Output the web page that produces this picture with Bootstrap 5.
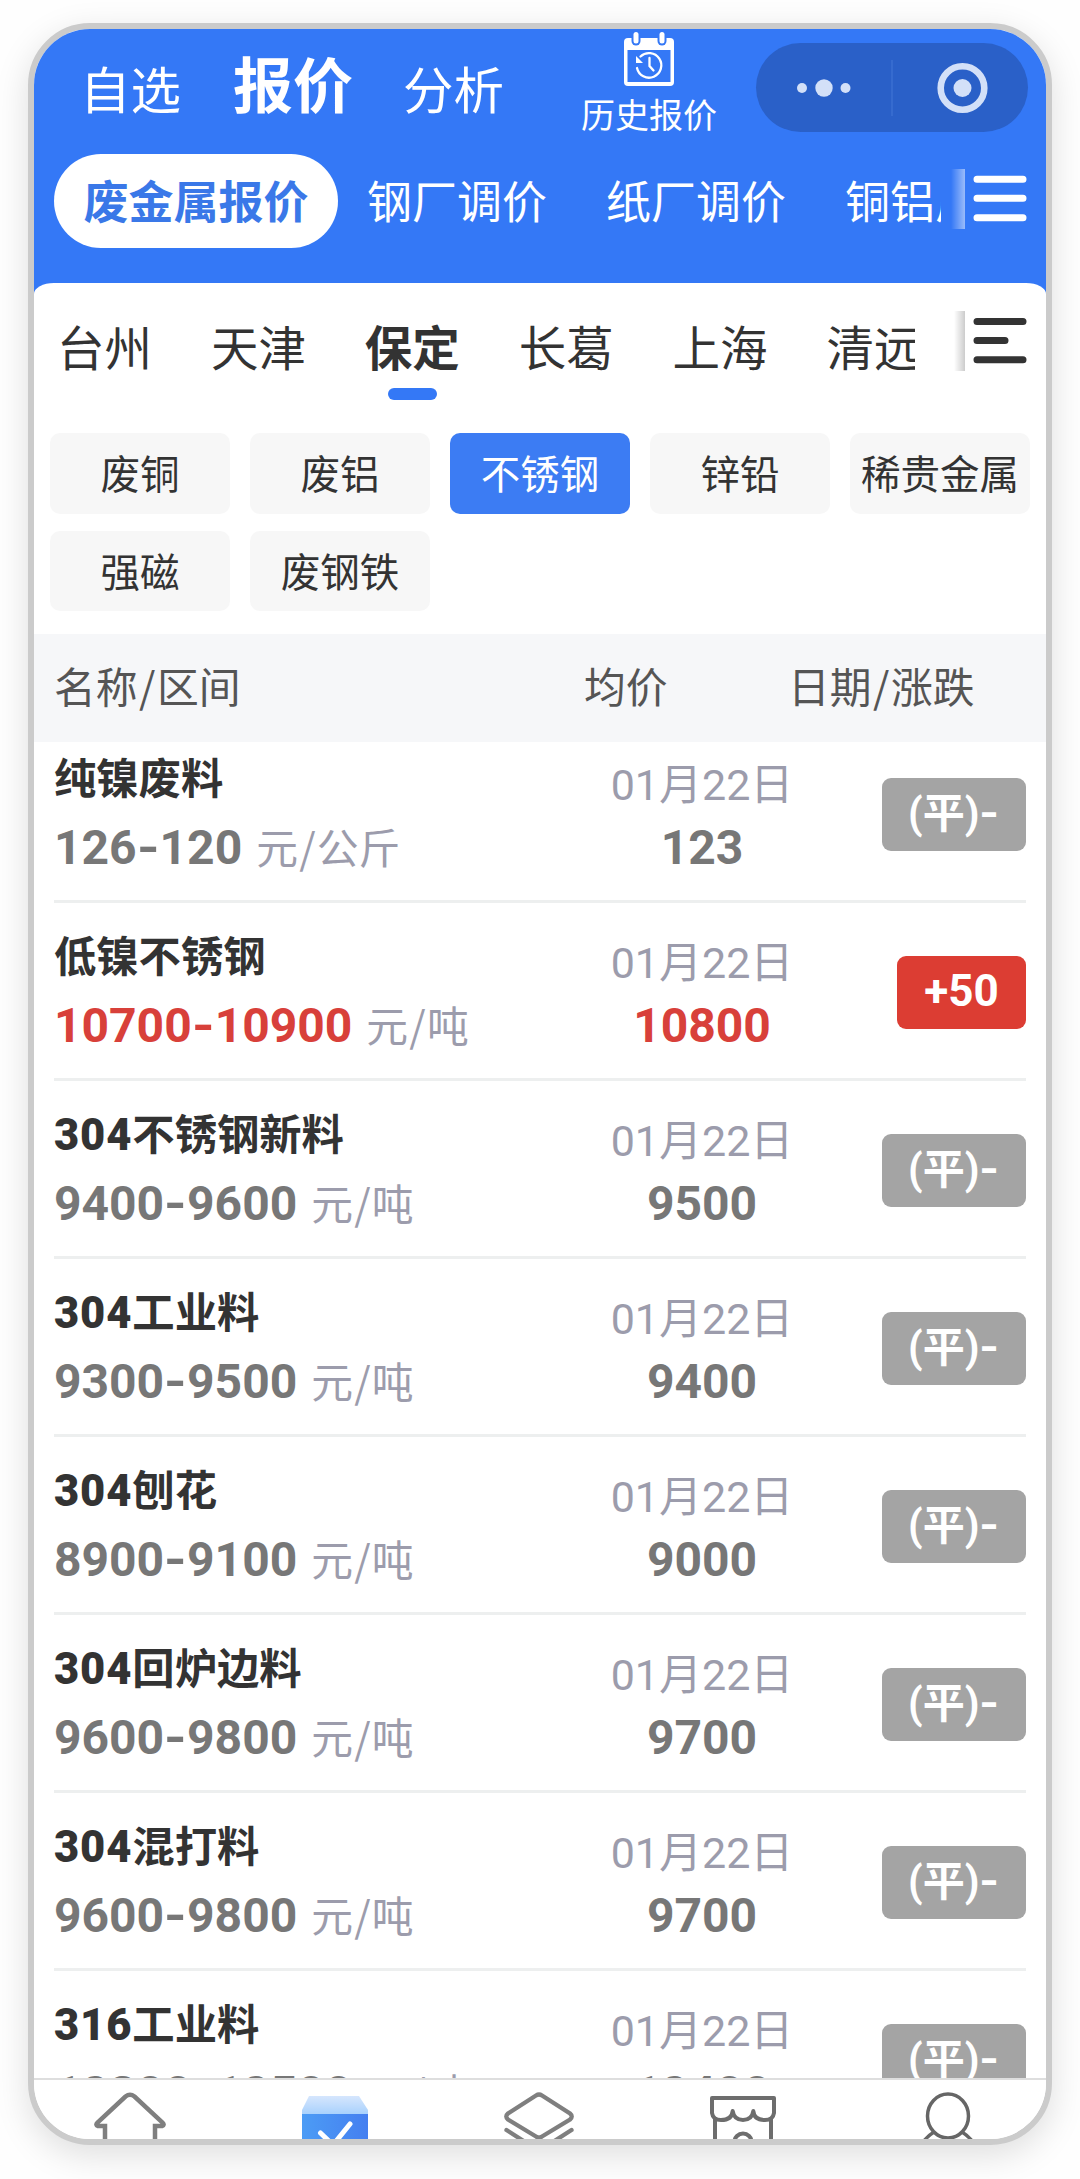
<!DOCTYPE html>
<html lang="zh-CN">
<head>
<meta charset="utf-8">
<meta name="viewport" content="width=device-width, initial-scale=1">
<title>废金属报价</title>
<link href="https://cdn.jsdelivr.net/npm/bootstrap@5.3.0/dist/css/bootstrap.min.css" rel="stylesheet">
<style>
body{background:#fefefe;font-family:"Noto Sans CJK SC",sans-serif;color:#333;padding:23px 28px 34px}
.phone{width:1024px;height:2122px;border:6px solid #cbcbcb;border-radius:62px;background:#fff;box-shadow:0 10px 34px rgba(0,0,0,.13);overflow:hidden}
.app-head{background:#3478f6;color:#fff}
.top-row{height:125px;padding-left:46px;padding-right:18px}
.top-tab{font-size:50.5px;line-height:60px;margin-top:28px;margin-right:52px}
.top-tab.on{font-size:60px;font-weight:700;margin-top:23px;margin-right:50px}
.history{width:140px;margin-left:23px;padding-top:3px;font-size:34px;line-height:40px}
.history svg{margin-bottom:8px}
.capsule{width:272px;height:89px;margin-top:13.5px;border-radius:45px;background:#2a60c8}
.sub-row{height:94px;padding-left:20px}
.sub-scroll{width:886.5px;font-size:45px;line-height:94px;gap:59px}
.sub-scroll .pill{background:#fff;color:#3a78e8;font-weight:700;padding:0 29.5px;border-radius:47px;margin-right:-30px}
.sub-scroll .lift{display:block;margin-top:-1px}
.fade-bar{width:14px;height:60px}
.fade-blue{background:linear-gradient(90deg,rgba(255,255,255,0),rgba(255,255,255,.5));margin:15px 8px 0 10px}
.fade-grey{width:11px;background:linear-gradient(90deg,rgba(0,0,0,0),rgba(0,0,0,.2));margin:28px 8px 0 39px}
.sheet{background:#fff;border-radius:20px 20px 0 0/11px 11px 0 0;margin-top:-11px}
.head-end{height:46px}
.city-row{height:126px}
.city-row svg{margin-top:31px}
.city-scroll{width:881px;padding-left:23px;gap:58.9px;font-size:47.5px;line-height:60px;padding-top:33px}
.city-scroll .on{font-weight:700}
.city-scroll .on::after{content:"";display:block;width:49px;height:12px;border-radius:6px;background:#3478f6;margin:12px auto 0}
.chips{padding:24px 16px 0;gap:17px 20px;height:225px;align-content:flex-start}
.chip{width:180px;height:80.5px;line-height:77px;border-radius:10px;background:#f7f7f7;font-size:39.5px;text-align:center}
.chip.on{background:#3c7cf3;color:#fff}
.list-head{height:108px;background:#f6f7f9;color:#555;font-size:41.8px;line-height:102px;padding-left:20px;z-index:1}
.list-head i{font-style:normal;margin:0 1.5px}
.h-name{width:530px}
.h-avg{width:204px}
.quotes{height:1353px;margin-top:-17px;padding:0 20px}
.quote{height:178px;border-bottom:3px solid #edefef}
.c-name{width:530px;padding-top:21px}
.c-mid{width:236px;padding-top:30px;text-align:center}
.c-chg{width:206px;padding-top:3px}
.q-name{font-size:42.3px;line-height:60px;font-weight:700;height:60px;white-space:nowrap}
.q-name b{font-family:Roboto,sans-serif;font-size:43.5px;letter-spacing:.9px}
.q-price{height:68px;line-height:68px;margin-top:6px;white-space:nowrap}
.num{font-family:Roboto,sans-serif;font-weight:700;font-size:48px;color:#777}
.num i,.chg i{font-style:normal;display:inline-block;margin:0 2px;transform:scaleX(1.2)}
.num.up{color:#d8403a}
.unit{font-size:41.8px;color:#9c9cac;margin-left:14px}
.unit i{font-style:normal;margin:0 1.200px}
.q-date{font-family:Roboto,"Noto Sans CJK SC",sans-serif;font-size:43px;line-height:60px;height:60px;color:#9c9cac}
.q-avg{height:68px;line-height:68px;margin-top:-1px}
.chg{min-width:129px;height:73px;line-height:71px;border-radius:9px;background:#a4a4a4;color:#fff;font-family:Roboto,"Noto Sans CJK SC",sans-serif;font-weight:700;font-size:42px;padding:0 26px;text-align:center}
.chg.up{background:#dc3d33;font-size:44px;padding:0}
.tabbar{height:64px;border-top:2px solid #dedede;margin:0 -4px 0 -6px;background:#fff;position:relative;z-index:1}
</style>
</head>
<body>
<main class="phone">
  <header class="app-head">
    <div class="top-row d-flex align-items-start text-nowrap">
      <span class="top-tab">自选</span><span class="top-tab on">报价</span><span class="top-tab">分析</span>
      <div class="history d-flex flex-column align-items-center">
        <svg width="52" height="54" viewBox="0 0 52 54">
          <path d="M5 6H47Q51 6 51 10V50Q51 54 47 54H5Q1 54 1 50V10Q1 6 5 6Z" fill="#fff"/>
          <path d="M4.500 18H47.500V50H4.500Z" fill="#3478f6"/>
          <rect x="8.500" y="-3" width="9" height="16.500" rx="4.500" fill="#3478f6"/><rect x="34.500" y="-3" width="9" height="16.500" rx="4.500" fill="#3478f6"/>
          <rect x="10.500" y="0" width="5" height="11.500" rx="2.500" fill="#fff"/><rect x="36.500" y="0" width="5" height="11.500" rx="2.500" fill="#fff"/>
          <path d="M14 36A12.300 12.300 0 1 0 17.500 24.500M26.500 26V34L30.500 38.500" fill="none" stroke="#fff" stroke-width="2.300" stroke-linecap="round"/>
          <path d="M13 24V31H20Z" fill="#fff"/>
        </svg>
        <span>历史报价</span>
      </div>
      <svg class="capsule ms-auto" viewBox="0 0 272 89">
        <g fill="#d3e0f8"><circle cx="46" cy="45" r="5"/><circle cx="68" cy="45" r="8.700"/><circle cx="89.500" cy="45" r="5"/><circle cx="206.500" cy="45" r="9"/></g>
        <circle cx="206.500" cy="45" r="21.800" fill="none" stroke="#d3e0f8" stroke-width="6.600"/>
        <path d="M136 17V73" stroke="#3b6fd2" stroke-width="1.500"/>
      </svg>
    </div>
    <div class="sub-row d-flex text-nowrap">
      <div class="sub-scroll d-flex overflow-hidden">
        <span class="pill"><span class="lift">废金属报价</span></span><span class="lift">钢厂调价</span><span class="lift">纸厂调价</span><span class="lift">铜铝厂调价</span>
      </div>
      <div class="fade-bar fade-blue"></div>
      <svg width="54" height="56" viewBox="0 0 54 56" class="mt-3"><path d="M4 9.300H50M4 28.300H50M4 47.700H50" stroke="#fff" stroke-width="7" stroke-linecap="round"/></svg>
    </div>
    <div class="head-end"></div>
  </header>
  <section class="sheet">
    <div class="city-row d-flex text-nowrap">
      <div class="city-scroll d-flex overflow-hidden">
        <span>台州</span><span>天津</span><span class="on">保定</span><span>长葛</span><span>上海</span><span>清远</span>
      </div>
      <div class="fade-bar fade-grey"></div>
      <svg width="54" height="54" viewBox="0 0 54 54"><path d="M4 7.500H50M4 26.500H32M4 45.700H50" stroke="#333" stroke-width="7" stroke-linecap="round"/></svg>
    </div>
    <div class="chips d-flex flex-wrap text-nowrap">
      <span class="chip">废铜</span><span class="chip">废铝</span><span class="chip on">不锈钢</span><span class="chip">锌铅</span><span class="chip">稀贵金属</span><span class="chip">强磁</span><span class="chip">废钢铁</span>
    </div>
  </section>
  <div class="list-head d-flex position-relative text-nowrap">
    <span class="h-name">名称<i>/</i>区间</span><span class="h-avg">均价</span><span>日期<i>/</i>涨跌</span>
  </div>
  <section class="quotes overflow-hidden">
    <div class="quote d-flex">
      <div class="c-name"><div class="q-name">纯镍废料</div><div class="q-price"><span class="num">126<i>-</i>120</span><span class="unit">元<i>/</i>公斤</span></div></div>
      <div class="c-mid"><div class="q-date">01月22日</div><div class="q-avg num">123</div></div>
      <div class="c-chg d-flex align-items-center justify-content-end"><span class="chg">(平)<i>-</i></span></div>
    </div>
    <div class="quote d-flex">
      <div class="c-name"><div class="q-name">低镍不锈钢</div><div class="q-price"><span class="num up">10700<i>-</i>10900</span><span class="unit">元<i>/</i>吨</span></div></div>
      <div class="c-mid"><div class="q-date">01月22日</div><div class="q-avg num up">10800</div></div>
      <div class="c-chg d-flex align-items-center justify-content-end"><span class="chg up">+50</span></div>
    </div>
    <div class="quote d-flex">
      <div class="c-name"><div class="q-name"><b>304</b>不锈钢新料</div><div class="q-price"><span class="num">9400<i>-</i>9600</span><span class="unit">元<i>/</i>吨</span></div></div>
      <div class="c-mid"><div class="q-date">01月22日</div><div class="q-avg num">9500</div></div>
      <div class="c-chg d-flex align-items-center justify-content-end"><span class="chg">(平)<i>-</i></span></div>
    </div>
    <div class="quote d-flex">
      <div class="c-name"><div class="q-name"><b>304</b>工业料</div><div class="q-price"><span class="num">9300<i>-</i>9500</span><span class="unit">元<i>/</i>吨</span></div></div>
      <div class="c-mid"><div class="q-date">01月22日</div><div class="q-avg num">9400</div></div>
      <div class="c-chg d-flex align-items-center justify-content-end"><span class="chg">(平)<i>-</i></span></div>
    </div>
    <div class="quote d-flex">
      <div class="c-name"><div class="q-name"><b>304</b>刨花</div><div class="q-price"><span class="num">8900<i>-</i>9100</span><span class="unit">元<i>/</i>吨</span></div></div>
      <div class="c-mid"><div class="q-date">01月22日</div><div class="q-avg num">9000</div></div>
      <div class="c-chg d-flex align-items-center justify-content-end"><span class="chg">(平)<i>-</i></span></div>
    </div>
    <div class="quote d-flex">
      <div class="c-name"><div class="q-name"><b>304</b>回炉边料</div><div class="q-price"><span class="num">9600<i>-</i>9800</span><span class="unit">元<i>/</i>吨</span></div></div>
      <div class="c-mid"><div class="q-date">01月22日</div><div class="q-avg num">9700</div></div>
      <div class="c-chg d-flex align-items-center justify-content-end"><span class="chg">(平)<i>-</i></span></div>
    </div>
    <div class="quote d-flex">
      <div class="c-name"><div class="q-name"><b>304</b>混打料</div><div class="q-price"><span class="num">9600<i>-</i>9800</span><span class="unit">元<i>/</i>吨</span></div></div>
      <div class="c-mid"><div class="q-date">01月22日</div><div class="q-avg num">9700</div></div>
      <div class="c-chg d-flex align-items-center justify-content-end"><span class="chg">(平)<i>-</i></span></div>
    </div>
    <div class="quote d-flex">
      <div class="c-name"><div class="q-name"><b>316</b>工业料</div><div class="q-price"><span class="num">12300<i>-</i>12500</span><span class="unit">元<i>/</i>吨</span></div></div>
      <div class="c-mid"><div class="q-date">01月22日</div><div class="q-avg num">12400</div></div>
      <div class="c-chg d-flex align-items-center justify-content-end"><span class="chg">(平)<i>-</i></span></div>
    </div>
  </section>
  <nav class="tabbar d-flex justify-content-around">
    <svg width="80" height="70" viewBox="0 0 80 70"><path d="M15 75V46H8Q5 45 7.500 42.500L35.500 16.500Q40 13 44.500 16.500L72.500 42.500Q75 45 72 46H65V75" fill="none" stroke="#7f7f7f" stroke-width="4.500"/></svg>
    <svg width="80" height="70" viewBox="0 0 80 70">
      <defs><linearGradient id="lid" x1="0" y1="0" x2="0" y2="1"><stop offset="0" stop-color="#d6e6fd"/><stop offset="1" stop-color="#a3cffd"/></linearGradient><linearGradient id="box"><stop offset="0" stop-color="#4c9cf5"/><stop offset="1" stop-color="#457ff0"/></linearGradient></defs>
      <path d="M14 16H64L73 30V36H7V30Z" fill="url(#lid)"/><path d="M7 34H73V75H7Z" fill="url(#box)"/>
      <path d="M25.500 53L38 65L55 44" fill="none" stroke="#fff" stroke-width="5" stroke-linecap="round"/>
    </svg>
    <svg width="80" height="70" viewBox="0 0 80 70" fill="none" stroke="#7f7f7f" stroke-width="4.300" stroke-linecap="round"><path d="M37 15.500Q40 13.500 43 15.500L71 33.500Q74.500 36.500 71 39.500L43 56.500Q40 58.500 37 56.500L9 39.500Q5.500 36.500 9 33.500Z"/><path d="M7.500 50L37 69M72.500 50L43 69"/></svg>
    <svg width="80" height="70" viewBox="0 0 80 70" fill="none" stroke="#6d6d6d" stroke-width="4"><path d="M9 18H71V33Q70 40 62 40Q51 40 50.300 31Q49 40 40 40Q31 40 29.700 31Q29 40 18 40Q10 40 9 33Z" stroke-linejoin="round"/><path d="M12 39V75M68 39V75M31.500 62A8.500 8.500 0 0 1 48.500 62"/></svg>
    <svg width="80" height="70" viewBox="0 0 80 70" fill="none" stroke="#666" stroke-width="3.500"><ellipse cx="40" cy="36" rx="20.500" ry="22"/><path d="M26 52Q18 57 13 65M54 52Q62 57 67 65"/></svg>
  </nav>
</main>
<script src="https://cdn.jsdelivr.net/npm/bootstrap@5.3.0/dist/js/bootstrap.bundle.min.js"></script>
</body>
</html>
